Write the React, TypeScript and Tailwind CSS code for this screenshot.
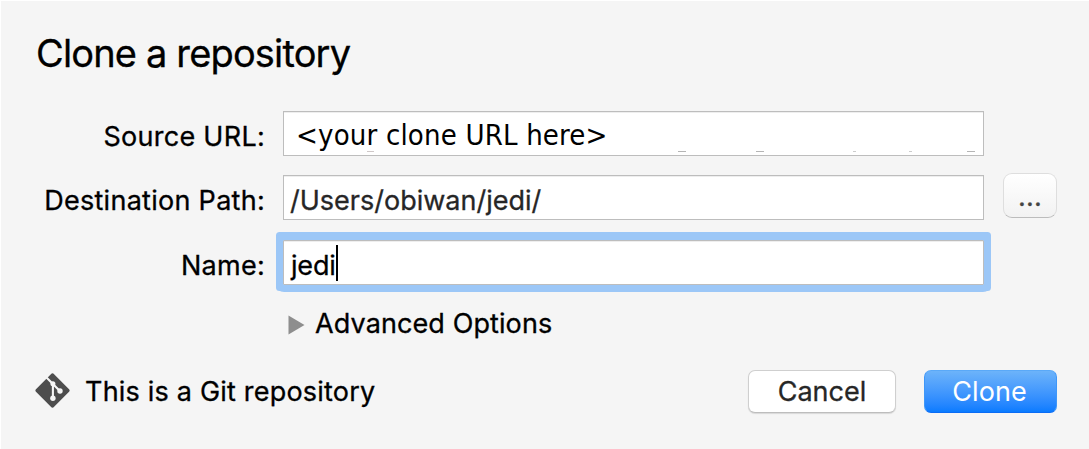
import React from "react";

const label = "mt-[6px] w-[265px] shrink-0 text-right text-[27px] leading-[34px] tracking-[0.28px] text-black whitespace-nowrap";
const field =
  "relative ml-[18px] flex h-[45px] w-[701px] shrink-0 items-center border border-[#bdbdbd] bg-white";

function GitIcon() {
  return (
    <svg className="-mt-[2px] h-[35px] w-[35px] shrink-0" viewBox="0 0 35 35" fill="none">
      <path
        d="M15.9 1.2a2.2 2.2 0 0 1 3.2 0L33.8 15.9a2.2 2.2 0 0 1 0 3.2L19.1 33.8a2.2 2.2 0 0 1-3.2 0L1.2 19.1a2.2 2.2 0 0 1 0-3.2Z"
        fill="#4d4d4d"
      />
      <path d="M11.5 4.5 L17.9 10.9 V25 M17.9 10.9 L24.9 17.9" stroke="#f5f5f5" strokeWidth="2.1" />
      <circle cx="17.9" cy="10.8" r="2.5" fill="#f5f5f5" />
      <circle cx="17.9" cy="25.2" r="2.7" fill="#f5f5f5" />
      <circle cx="25" cy="18" r="2.7" fill="#f5f5f5" />
    </svg>
  );
}

export default function App() {
  return (
    <div className="h-[449px] w-[1089px] overflow-hidden border-l border-t border-white bg-[#f5f5f5] font-['Inter',sans-serif] text-black [-webkit-text-stroke:0.3px]">
      <h1 className="ml-[35px] mt-[28px] h-[48px] whitespace-nowrap text-[38px] leading-[48px] tracking-[-0.84px]">Clone a repository</h1>

      <div className="-ml-px mt-[34px] flex h-[45px] items-center">
        <label className={label}>Source URL:</label>
        <div className={field + " shadow-[inset_0_1px_0_#eeeeee]"}>
          <span className="ml-[12px] mt-[3px] whitespace-nowrap font-['DejaVu_Sans_Condensed','DejaVu_Sans',sans-serif] text-[29px] leading-[34px] tracking-[0.18px] [-webkit-text-stroke:0px] [font-stretch:condensed]">
            &lt;your clone URL here&gt;
          </span>
          <i className="absolute left-[83px] top-[39px] h-px w-[7px] bg-[#cfc8c8]" />
          <i className="absolute left-[394px] top-[39px] h-px w-[8px] bg-[#b5b5b5]" />
          <i className="absolute left-[472px] top-[39px] h-px w-[8px] bg-[#b5b5b5]" />
          <i className="absolute left-[569px] top-[39px] h-px w-[3px] bg-[#cccccc]" />
          <i className="absolute left-[625px] top-[39px] h-px w-[3px] bg-[#cccccc]" />
          <i className="absolute left-[683px] top-[39px] h-px w-[8px] bg-[#b5b5b5]" />
        </div>
      </div>

      <div className="-ml-px mt-[19px] flex h-[45px] items-center">
        <label className={label}>Destination Path:</label>
        <div className={field + " shadow-[inset_0_1px_0_#eeeeee]"}>
          <span className="ml-[6px] mt-[7px] whitespace-nowrap text-[27px] leading-[34px] tracking-[0px] text-[#262626]">/Users/obiwan/jedi/</span>
        </div>
        <button className="-mt-[4px] ml-[19px] flex h-[45px] w-[54px] items-center justify-center rounded-[9px] border border-[#dedede] border-b-[#bcbcbc] bg-linear-to-b from-white to-[#f2f2f2]">
          <span className="mt-[3px] text-[27px] leading-[34px] tracking-[0.3px] text-[#444]">...</span>
        </button>
      </div>

      <div className="-ml-px mt-[19px] flex h-[46px] items-center">
        <label className={label + " relative top-px"}>Name:</label>
        <div className={field + " rounded-[1px] shadow-[inset_0_1px_0_#eeeeee,0_-1px_0_7px_#9cc7f7] outline-[7px] outline-solid outline-[#9cc7f7]"}>
          <span className="ml-[7px] mt-[7px] whitespace-nowrap text-[27px] leading-[34px] tracking-[-0.2px]">jedi</span>
          <i className="absolute left-[52px] top-[4px] h-[36px] w-[2px] bg-black" />
        </div>
      </div>

      <div className="ml-[287px] mt-[20px] flex h-[36px] items-center">
        <svg className="mt-[3px] h-[20px] w-[17px]" viewBox="0 0 17 20">
          <path d="M0.5 0.5 L16.5 10 L0.5 19.5Z" fill="#8e8e8e" />
        </svg>
        <span className="ml-[10px] mt-[2px] whitespace-nowrap text-[27px] leading-[34px] tracking-[0.1px]">Advanced Options</span>
      </div>

      <div className="mt-[28px] flex h-[44px] items-center pl-[34px]">
        <GitIcon />
        <span className="ml-[15px] mt-[2px] w-[400px] whitespace-nowrap text-[27px] leading-[34px] tracking-[0.2px]">This is a Git repository</span>
        <button className="ml-[263px] h-[43px] w-[148px] rounded-[7px] border border-[#cfcfcf] border-b-[#bdbdbd] bg-white pt-[2px] text-[27px] leading-[34px] tracking-[0px] text-[#262626] shadow-[0_1px_1px_rgba(0,0,0,0.12)]">
          Cancel
        </button>
        <button className="ml-[28px] h-[43px] w-[133px] rounded-[7px] border border-x-[#3f97f8] border-b-[#0a6cf5] border-t-[#5aa9f8] bg-linear-to-b from-[#6cb3fa] to-[#077bff] pr-[2px] pt-[2px] text-[27px] leading-[34px] tracking-[0.1px] text-white [-webkit-text-stroke:0px]">
          Clone
        </button>
      </div>
    </div>
  );
}
